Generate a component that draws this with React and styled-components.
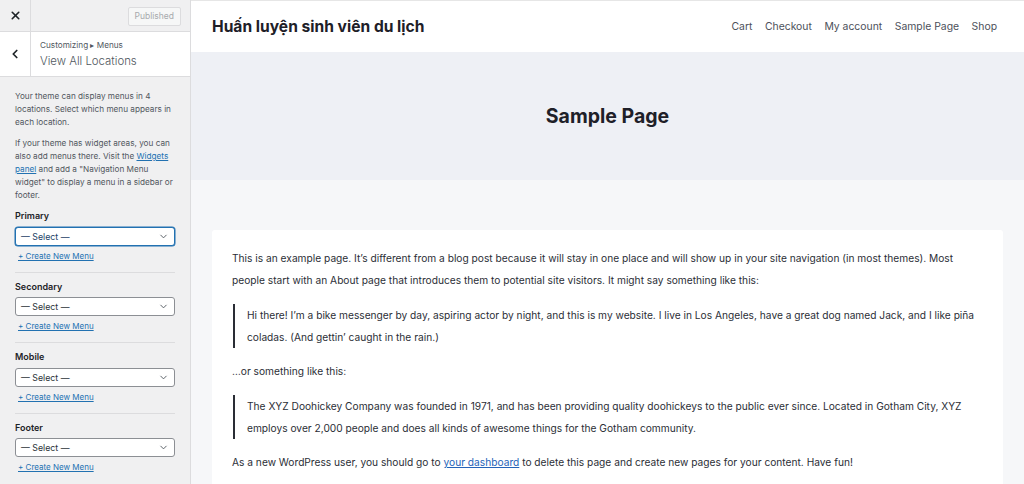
import React from 'react';
import styled, {createGlobalStyle} from 'styled-components';
import {ChevronDown, ChevronLeft, X} from 'lucide-react';

const GlobalStyle = createGlobalStyle`
  html, body {
    margin: 0;
    padding: 0;
    width: 1024px;
    height: 484px;
    overflow: hidden;
    font-family: Inter, "Noto Sans", sans-serif;
  }
`;

const Screen = styled.div`
  display: flex;
  width: 1024px;
  height: 484px;
  overflow: hidden;
`;

/* ---------- customizer sidebar ---------- */

const Sidebar = styled.aside`
  width: 190px;
  flex-shrink: 0;
  background: #f0f0f1;
  border-right: 1px solid #dcdcde;
  display: flex;
  flex-direction: column;
  color: #50575e;
  overflow: hidden;
`;

const TopBar = styled.div`
  height: 32px;
  flex-shrink: 0;
  box-sizing: border-box;
  display: flex;
  align-items: center;
  justify-content: space-between;
  border-bottom: 1px solid #dcdcde;
  padding-right: 9px;
`;

const IconCell = styled.div`
  width: 30px;
  align-self: stretch;
  display: flex;
  align-items: center;
  justify-content: center;
  border-right: 1px solid #dcdcde;
  color: #1d2327;
`;

const PublishedButton = styled.div`
  font-size: 8.5px;
  line-height: 11px;
  color: #a7aaad;
  background: #f6f7f7;
  border: 1px solid #dcdcde;
  border-radius: 2px;
  padding: 3px 6px;
  margin-top: 1px;
`;

const SectionHead = styled.div`
  height: 45px;
  flex-shrink: 0;
  box-sizing: border-box;
  background: #fff;
  display: flex;
  border-bottom: 1px solid #dcdcde;
`;

const HeadText = styled.div`
  display: flex;
  flex-direction: column;
  justify-content: center;
  padding-left: 9px;
  gap: 3px;
`;

const Crumb = styled.span`
  font-size: 8.2px;
  color: #50575e;
`;

const HeadTitle = styled.span`
  font-size: 11.4px;
  font-weight: 300;
  color: #50575e;
  margin-top: 1px;
`;

const SidebarBody = styled.div`
  padding: 13px 15px 0;
`;

const Note = styled.p`
  margin: 0 0 8px;
  font-size: 8.2px;
  line-height: 13px;
  color: #50575e;
  a {
    color: #2271b1;
  }
`;

const Location = styled.div`
  padding-bottom: 11px;
  border-bottom: ${p => (p.last ? 'none' : '1px solid #dcdcde')};
  margin-bottom: 8px;
`;

const LocLabel = styled.div`
  font-size: 9px;
  line-height: 11px;
  font-weight: 600;
  color: #1d2327;
  margin-bottom: 5.5px;
`;

const Select = styled.div`
  height: 19px;
  box-sizing: border-box;
  background: #fff;
  border: 1px solid ${p => (p.focused ? '#2271b1' : '#8c8f94')};
  box-shadow: ${p => (p.focused ? '0 0 0 0.5px #2271b1' : 'none')};
  border-radius: 3px;
  display: flex;
  align-items: center;
  justify-content: space-between;
  padding: 0 5px;
  font-size: 8.8px;
  color: ${p => (p.focused ? '#1d3f66' : '#2c3338')};
`;

const CreateLink = styled.a`
  display: block;
  margin: 5px 0 0 3px;
  font-size: 8px;
  line-height: 10px;
  color: #2271b1;
  text-decoration: underline;
`;

/* ---------- site preview ---------- */

const Preview = styled.main`
  flex: 1;
  background: #f6f7f9;
  display: flex;
  flex-direction: column;
  border-top: 1px solid #e6e6e6;
`;

const SiteHeader = styled.header`
  height: 51px;
  flex-shrink: 0;
  background: #fff;
  display: flex;
  align-items: center;
  justify-content: space-between;
  padding: 0 27px 0 21px;
`;

const SiteTitle = styled.div`
  font-size: 15.6px;
  font-weight: 700;
  color: #1e2028;
`;

const Nav = styled.nav`
  display: flex;
  gap: 12.5px;
  font-size: 10.4px;
  color: #4c505a;
`;

const Hero = styled.div`
  height: 128px;
  flex-shrink: 0;
  background: #eef0f5;
  display: flex;
  align-items: center;
  justify-content: center;
`;

const PageTitle = styled.h1`
  margin: 0;
  font-size: 19.5px;
  font-weight: 700;
  color: #1e2028;
`;

const Card = styled.article`
  margin: 50px 21px 0;
  background: #fff;
  border-radius: 3px;
  padding: 17px 20px 0;
  flex: 1;
`;

const Para = styled.p`
  margin: 0 0 12.5px;
  font-size: 10.2px;
  line-height: 22px;
  color: #2b2e36;
  a {
    color: #2563b8;
  }
`;

const Quote = styled.blockquote`
  margin: 0 0 12.5px 1px;
  padding: 0 0 0 12px;
  border-left: 2.5px solid #2a2d35;
  font-size: 10.2px;
  line-height: 22px;
  color: #2b2e36;
`;

const locations = ['Primary', 'Secondary', 'Mobile', 'Footer'];
const navItems = ['Cart', 'Checkout', 'My account', 'Sample Page', 'Shop'];

const App = () => {
  return (
    <>
      <GlobalStyle />
      <Screen>
        <Sidebar>
          <TopBar>
            <IconCell>
              <X size={13} strokeWidth={3} />
            </IconCell>
            <PublishedButton>Published</PublishedButton>
          </TopBar>
          <SectionHead>
            <IconCell>
              <ChevronLeft size={14} strokeWidth={3} />
            </IconCell>
            <HeadText>
              <Crumb>Customizing ▸ Menus</Crumb>
              <HeadTitle>View All Locations</HeadTitle>
            </HeadText>
          </SectionHead>
          <SidebarBody>
            <Note>Your theme can display menus in 4 locations. Select which menu appears in each location.</Note>
            <Note>
              If your theme has widget areas, you can also add menus there. Visit the <a href="#">Widgets panel</a> and
              add a "Navigation Menu widget" to display a menu in a sidebar or footer.
            </Note>
            {locations.map((name, i) => (
              <Location key={name} last={i === locations.length - 1}>
                <LocLabel>{name}</LocLabel>
                <Select focused={i === 0}>
                  <span>— Select —</span>
                  <ChevronDown size={11} color="#50575e" />
                </Select>
                <CreateLink href="#">+ Create New Menu</CreateLink>
              </Location>
            ))}
          </SidebarBody>
        </Sidebar>

        <Preview>
          <SiteHeader>
            <SiteTitle>Huấn luyện sinh viên du lịch</SiteTitle>
            <Nav>
              {navItems.map(item => (
                <span key={item}>{item}</span>
              ))}
            </Nav>
          </SiteHeader>
          <Hero>
            <PageTitle>Sample Page</PageTitle>
          </Hero>
          <Card>
            <Para>
              This is an example page. It’s different from a blog post because it will stay in one place and will show up
              in your site navigation (in most themes). Most people start with an About page that introduces them to
              potential site visitors. It might say something like this:
            </Para>
            <Quote>
              Hi there! I’m a bike messenger by day, aspiring actor by night, and this is my website. I live in Los
              Angeles, have a great dog named Jack, and I like piña coladas. (And gettin’ caught in the rain.)
            </Quote>
            <Para>…or something like this:</Para>
            <Quote>
              The XYZ Doohickey Company was founded in 1971, and has been providing quality doohickeys to the public ever
              since. Located in Gotham City, XYZ employs over 2,000 people and does all kinds of awesome things for the
              Gotham community.
            </Quote>
            <Para>
              As a new WordPress user, you should go to <a href="#">your dashboard</a> to delete this page and create new
              pages for your content. Have fun!
            </Para>
          </Card>
        </Preview>
      </Screen>
    </>
  );
};

export default App;
